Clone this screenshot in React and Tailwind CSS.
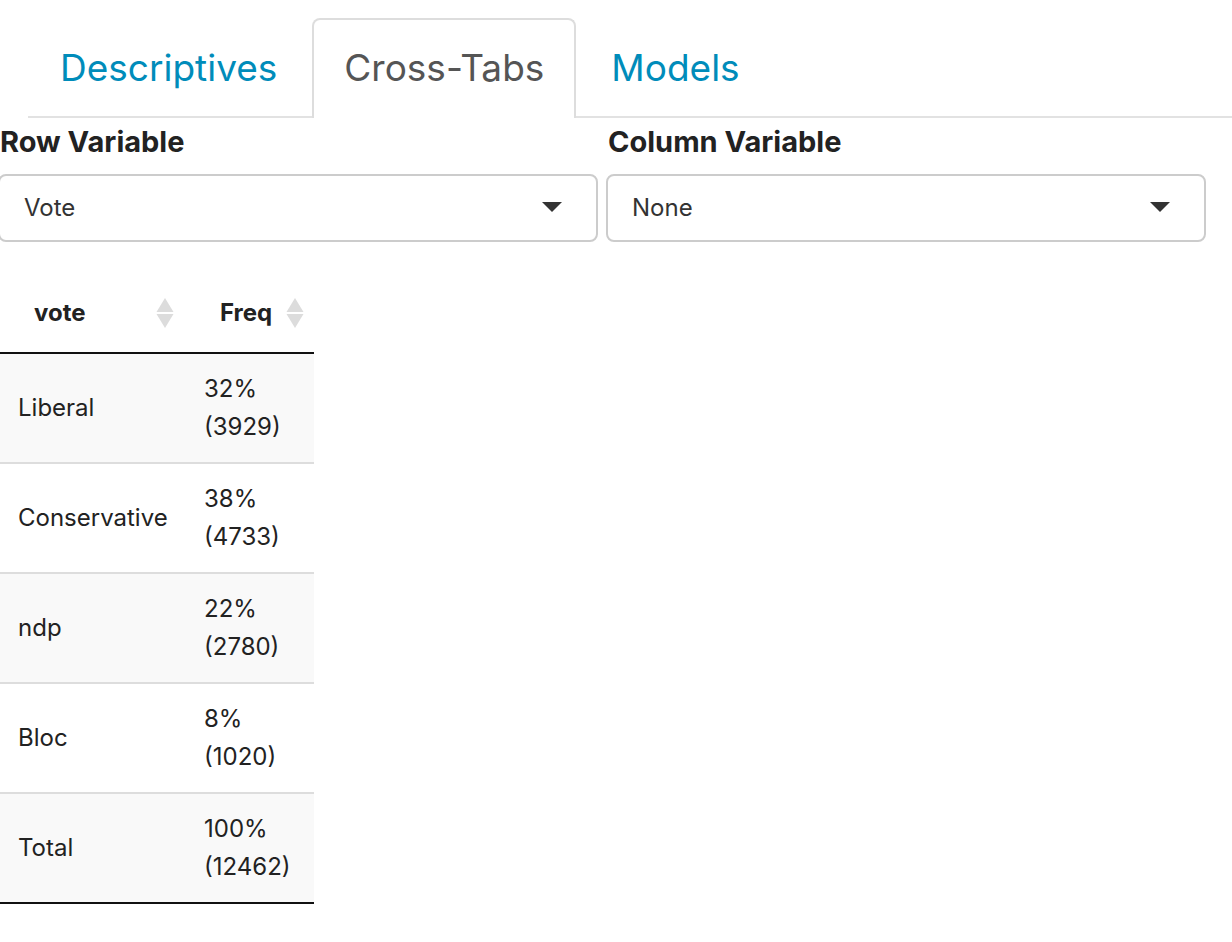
import React from "react";

const rows = [
  ["Liberal", "32%", "(3929)"],
  ["Conservative", "38%", "(4733)"],
  ["ndp", "22%", "(2780)"],
  ["Bloc", "8%", "(1020)"],
  ["Total", "100%", "(12462)"],
];

function SortIcon() {
  return (
    <svg width="18" height="32" viewBox="0 0 18 32" aria-hidden="true" className="shrink-0 fill-[#dcdcdc]">
      <path d="M9 1L17.5 15H.5z" />
      <path d="M9 31L.5 17H17.5z" />
    </svg>
  );
}

function SelectField({ id, label, value, options }) {
  return (
    <div className="min-w-0 flex-1">
      <label htmlFor={id} className="block pt-[2px] pl-[2px] text-[29px] leading-[44px] font-bold">
        {label}
      </label>
      <div className="relative mt-[10px]">
        <select
          id={id}
          defaultValue={value}
          className="block h-[68px] w-full appearance-none rounded-lg border-2 border-[#cccccc] bg-white px-6 text-[24px] text-[#333333]"
        >
          {options.map((o) => (
            <option key={o}>{o}</option>
          ))}
        </select>
        <svg
          width="20"
          height="10"
          viewBox="0 0 20 10"
          aria-hidden="true"
          className="pointer-events-none absolute top-7 right-9 fill-[#333333]"
        >
          <path d="M0 0H20L10 10z" />
        </svg>
      </div>
    </div>
  );
}

export default function App() {
  return (
    <div className="min-h-screen overflow-x-hidden bg-white font-['Inter',sans-serif] text-[#222222]">
      <nav className="ml-7 flex border-b-2 border-[#e2e2e2] pt-[18px] text-[37px] leading-[60px]">
        <a href="#descriptives" className="pt-5 pr-[35px] pb-[18px] pl-8 text-[#008cba]">
          Descriptives
        </a>
        <a
          href="#cross-tabs"
          aria-current="page"
          className="-mb-[2px] rounded-t-lg border-2 border-b-0 border-[#dddddd] bg-white px-[30px] pt-[18px] pb-5 text-[#555555]"
        >
          Cross-Tabs
        </a>
        <a href="#models" className="px-[35px] pt-5 pb-[18px] text-[#008cba]">
          Models
        </a>
      </nav>
      <form className="-ml-[2px] mr-[26px] flex gap-2">
        <SelectField id="row" label="Row Variable" value="Vote" options={["Vote"]} />
        <SelectField id="column" label="Column Variable" value="None" options={["None", "Vote"]} />
      </form>
      <table className="mt-[31px] w-[314px] table-fixed border-collapse border-b-2 border-[#111111] text-[24px] leading-[38px]">
        <colgroup>
          <col className="w-[186px]" />
          <col />
        </colgroup>
        <thead>
          <tr className="h-20 border-b-2 border-[#111111]">
            <th scope="col" className="pr-3 pl-[34px] font-bold">
              <div className="flex items-center justify-between">
                vote
                <SortIcon />
              </div>
            </th>
            <th scope="col" className="pr-[10px] pl-[34px] font-bold">
              <div className="flex items-center justify-between">
                Freq
                <SortIcon />
              </div>
            </th>
          </tr>
        </thead>
        <tbody>
          {rows.map(([name, pct, count]) => (
            <tr key={name} className="h-[110px] border-t-2 border-[#dddddd] odd:bg-[#f9f9f9] first:border-[#111111]">
              <td className="pl-[18px]">{name}</td>
              <td className="pl-[18px]">
                {pct}
                <br />
                {count}
              </td>
            </tr>
          ))}
        </tbody>
      </table>
    </div>
  );
}
